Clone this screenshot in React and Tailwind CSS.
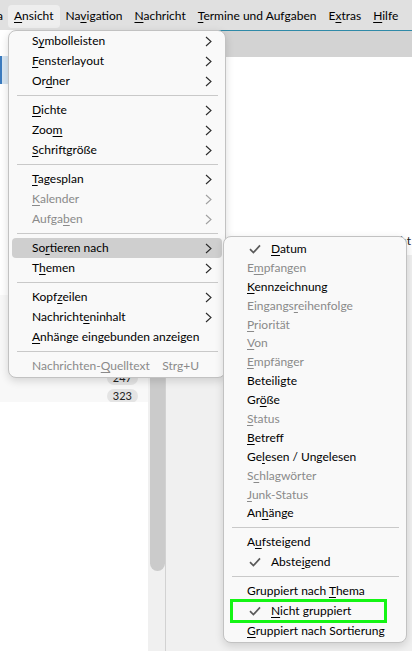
import React from 'react';

// label with "&" before the access-key letter
const Mn = ({ text }) => {
  const i = text.indexOf('&');
  if (i < 0) return <span>{text}</span>;
  return (
    <span>
      {text.slice(0, i)}
      <span className="underline decoration-1 underline-offset-[2px]">{text[i + 1]}</span>
      {text.slice(i + 2)}
    </span>
  );
};

const Chevron = ({ disabled }) => (
  <svg width="7" height="11" viewBox="0 0 7 11" className="shrink-0">
    <path d="M1 1 L6 5.5 L1 10" fill="none" stroke={disabled ? '#a0a0a0' : '#2b2b2b'} strokeWidth="1.1" />
  </svg>
);

const Check = () => (
  <svg width="12" height="10" viewBox="0 0 12 10" className="shrink-0">
    <path d="M1 5.2 L4.4 8.6 L11 1.4" fill="none" stroke="#5a5a5a" strokeWidth="1.7" />
  </svg>
);

const viewMenu = [
  [
    { label: 'S&ymbolleisten', sub: true },
    { label: '&Fensterlayout', sub: true },
    { label: 'Or&dner', sub: true },
  ],
  [
    { label: '&Dichte', sub: true },
    { label: 'Zoo&m', sub: true },
    { label: '&Schriftgröße', sub: true },
  ],
  [
    { label: '&Tagesplan', sub: true },
    { label: '&Kalender', sub: true, disabled: true },
    { label: 'Aufga&ben', sub: true, disabled: true },
  ],
  [
    { label: 'So&rtieren nach', sub: true, active: true },
    { label: 'T&hemen', sub: true },
  ],
  [
    { label: 'Kopf&zeilen', sub: true },
    { label: 'Nachricht&eninhalt', sub: true },
    { label: '&Anhänge eingebunden anzeigen' },
  ],
  [{ label: 'Nachrichten-&Quelltext', accel: 'Strg+U', disabled: true }],
];

const sortMenu = [
  [
    { label: '&Datum', checked: true },
    { label: 'E&mpfangen', disabled: true },
    { label: '&Kennzeichnung' },
    { label: 'Eingangs&reihenfolge', disabled: true },
    { label: '&Priorität', disabled: true },
    { label: '&Von', disabled: true },
    { label: '&Empfänger', disabled: true },
    { label: 'Beteiligte' },
    { label: 'Gr&öße' },
    { label: '&Status', disabled: true },
    { label: '&Betreff' },
    { label: 'Ge&lesen / Ungelesen' },
    { label: 'S&chlagwörter', disabled: true },
    { label: '&Junk-Status', disabled: true },
    { label: 'An&hänge' },
  ],
  [
    { label: 'A&ufsteigend' },
    { label: 'Abste&igend', checked: true },
  ],
  [
    { label: 'Gruppiert nach &Thema' },
    { label: '&Nicht gruppiert', checked: true, marked: true },
    { label: '&Gruppiert nach Sortierung' },
  ],
];

const Separator = () => (
  <div className="h-[9px] flex items-center ml-[8px] mr-[7px]">
    <div className="h-px w-full bg-[#c9c9c9]" />
  </div>
);

const MainItem = ({ item }) => (
  <div
    className={`h-[20px] mx-[3px] pl-[20px] pr-[10px] flex items-center whitespace-nowrap rounded-[4px] ${
      item.active ? 'bg-[#cfcfcf]' : ''
    } ${item.disabled ? 'text-[#8a8a8a]' : 'text-black'}`}
  >
    <Mn text={item.label} />
    {item.accel && <span className="ml-auto mr-[13px]">{item.accel}</span>}
    {item.sub && (
      <span className="ml-auto">
        <Chevron disabled={item.disabled} />
      </span>
    )}
  </div>
);

const SortItem = ({ item, tall }) => (
  <div
    className={`relative ${tall ? 'h-[20px]' : 'h-[18.9px]'} mx-[3px] flex items-center whitespace-nowrap ${
      item.checked ? 'pl-[22px]' : 'pl-[20px]'
    } ${item.disabled ? 'text-[#8a8a8a]' : 'text-black'}`}
  >
    {item.checked && (
      <span className="mr-[10px] flex">
        <Check />
      </span>
    )}
    <Mn text={item.label} />
    {item.marked && (
      <div className="absolute left-[3px] top-[-2px] w-[157px] h-[24px] border-[3px] border-[#14f514]" />
    )}
  </div>
);

const MenuBarItem = ({ label, open }) => (
  <div
    className={`h-[23px] px-[6px] flex items-center whitespace-nowrap rounded-[4px] ${open ? 'bg-[#eeeeee]' : ''}`}
  >
    <Mn text={label} />
  </div>
);

export default function App() {
  return (
    <div className="relative w-[412px] h-[651px] overflow-hidden bg-[#f0f0f0] font-['Lato',sans-serif] text-[12px] leading-[16px] text-black">
      {/* menu bar */}
      <div className="h-[30px] bg-[#e0e0e0] flex items-center pt-[2px]">
        <div className="ml-[-3px] w-[11px] shrink-0 overflow-hidden">
          <span>a</span>
        </div>
        <MenuBarItem label="&Ansicht" open />
        <MenuBarItem label="Na&vigation" />
        <MenuBarItem label="&Nachricht" />
        <MenuBarItem label="&Termine und Aufgaben" />
        <MenuBarItem label="E&xtras" />
        <MenuBarItem label="&Hilfe" />
      </div>

      {/* window body behind the menus */}
      <div className="flex h-[621px]">
        <div className="w-[148px] shrink-0 flex flex-col">
          <div className="h-[265px] bg-white">
            <div className="mt-[26px] h-[28px] w-[8px] bg-[#d6e5f2] border-l-2 border-[#3b7bbf]" />
          </div>
          <div className="h-[107px] bg-[#f8f8f8] flex flex-col items-end pr-[10px] pt-[76px] gap-[4px]">
            <span className="h-[14px] px-[6px] rounded-full bg-[#e4e4e4] text-[11px] leading-[14px] text-[#222]">247</span>
            <span className="h-[14px] px-[6px] rounded-full bg-[#e4e4e4] text-[11px] leading-[14px] text-[#222]">323</span>
          </div>
          <div className="flex-1 bg-white" />
        </div>
        <div className="w-[17px] shrink-0 bg-[#f0f0f0] pl-[2px]">
          <div className="h-[541px] w-[15px] bg-[#cbcbcb] rounded-b-[8px]" />
        </div>
        <div className="w-px shrink-0 bg-[#d2d2d2]" />
        <div className="flex-1 min-w-0 flex flex-col">
          <div className="h-[27px] bg-[#d3d3d3] border-t border-[#2f8aa8]" />
          <div className="h-[198px] bg-white pl-[60px] pt-[176px] text-[#222] whitespace-nowrap overflow-hidden">
            Aktualisierung der Projektübersicht und Termine
          </div>
          <div className="flex-1 bg-[#f0f0f0]" />
        </div>
      </div>

      {/* Ansicht menu */}
      <div className="absolute left-[8px] top-[30px] w-[218px] bg-[#f9f9f9] border border-[#c2c2c2] rounded-[8px] pb-px shadow-[0_3px_8px_rgba(0,0,0,0.14)]">
        {viewMenu.map((group, gi) => (
          <div key={gi}>
            {gi > 0 && <Separator />}
            {group.map((item) => (
              <MainItem key={item.label} item={item} />
            ))}
          </div>
        ))}
      </div>

      {/* Sortieren nach submenu */}
      <div className="absolute left-[223px] top-[236px] w-[184px] bg-[#f9f9f9] border border-[#c2c2c2] rounded-[8px] pt-[2.5px] pb-px shadow-[0_3px_8px_rgba(0,0,0,0.14)]">
        {sortMenu.map((group, gi) => (
          <div key={gi}>
            {gi > 0 && <Separator />}
            {group.map((item) => (
              <SortItem key={item.label} item={item} tall={gi > 0} />
            ))}
          </div>
        ))}
      </div>
    </div>
  );
}
